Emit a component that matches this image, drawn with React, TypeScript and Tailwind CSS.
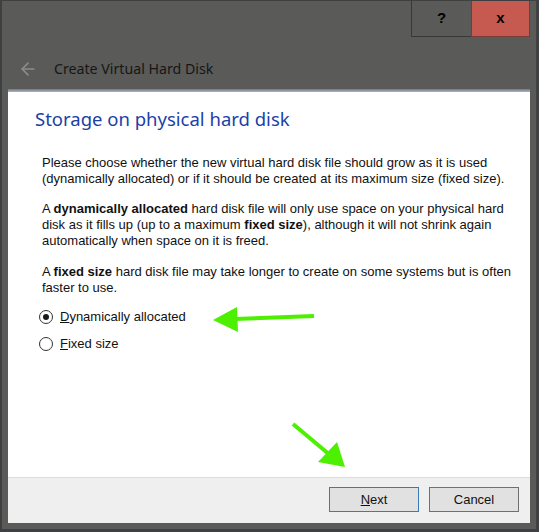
import { ArrowLeft } from 'lucide-react'

const ui = { fontFamily: '"Noto Sans", "Open Sans", sans-serif' }
const body = { fontFamily: '"Liberation Sans", Arial, sans-serif' }

function Radio({ checked, label, accel }: { checked: boolean; label: string; accel: string }) {
  return (
    <div className="flex items-center h-[16px]">
      <span className="w-[14px] h-[14px] rounded-full border border-[#333] bg-white flex items-center justify-center">
        {checked && <span className="w-[6px] h-[6px] rounded-full bg-[#1a1a1a]" />}
      </span>
      <span className="ml-[7px] text-[13px] text-[#111]" style={body}>
        <span className="underline">{accel}</span>
        {label}
      </span>
    </div>
  )
}

export default function App() {
  return (
    <div className="w-[539px] h-[532px] bg-[#3e4042] border-l-2 border-t border-r-[3px] border-b-[3px] border-[#3e4042] overflow-hidden">
      <div className="relative h-full bg-[#5a5a58] flex flex-col px-[6px] pb-[6px]">
        {/* caption buttons */}
        <div className="flex justify-end h-[36px] -mt-px">
          <div className="w-[60px] h-[37px] border border-[#383838] border-r-0 flex items-center justify-center text-[15px] font-bold text-black" style={body}>
            ?
          </div>
          <div className="w-[59px] h-[37px] bg-[#c75a50] border border-[#7a3a35] flex items-center justify-center text-[15px] font-bold text-black" style={body}>
            x
          </div>
        </div>

        {/* wizard header */}
        <div className="h-[53px] flex items-center pl-[10px] pt-[12px]">
          <ArrowLeft className="w-[20px] h-[20px] text-[#8c8c8a]" strokeWidth={2} />
          <span className="ml-[16px] text-[14.2px] text-[#161616]" style={ui}>
            Create Virtual Hard Disk
          </span>
        </div>

        <div className="h-[3px] bg-gradient-to-b from-[#6f7a86] to-[#a9b6c6]" />

        {/* page */}
        <div className="flex-1 bg-white pl-[27px] pr-4 pt-[14px]">
          <h1 className="text-[18.5px] text-[#1c3fa8] leading-[26px]" style={ui}>
            Storage on physical hard disk
          </h1>
          <div className="pl-[7px] mt-[23px] text-[13px] leading-[16px] text-[#111] whitespace-nowrap" style={body}>
            <p>
              Please choose whether the new virtual hard disk file should grow as it is used
              <br />
              (dynamically allocated) or if it should be created at its maximum size (fixed size).
            </p>
            <p className="mt-[14px]">
              A <b>dynamically allocated</b> hard disk file will only use space on your physical hard
              <br />
              disk as it fills up (up to a maximum <b>fixed size</b>), although it will not shrink again
              <br />
              automatically when space on it is freed.
            </p>
            <p className="mt-[15px]">
              A <b>fixed size</b> hard disk file may take longer to create on some systems but is often
              <br />
              faster to use.
            </p>
            <div className="mt-[13px] -ml-[3px] flex flex-col gap-[11px]">
              <Radio checked label="ynamically allocated" accel="D" />
              <Radio checked={false} label="ixed size" accel="F" />
            </div>
          </div>
        </div>

        {/* footer */}
        <div className="h-[46px] bg-[#efefef] border-t border-[#dcdcdc] flex items-start justify-end gap-[10px] pr-[11px] pt-[9px]">
          <button className="w-[90px] h-[25px] bg-[#e1e1e1] border border-[#3d7ab3] text-[13px] leading-[22px] text-[#111]" style={body}>
            <span className="underline">N</span>ext
          </button>
          <button className="w-[90px] h-[25px] bg-[#e1e1e1] border border-[#707070] text-[13px] leading-[22px] text-[#111]" style={body}>
            Cancel
          </button>
        </div>

        {/* annotation arrows */}
        <svg className="absolute left-[-2px] top-[-1px] pointer-events-none" width="539" height="532">
          <line x1="314" y1="316" x2="234" y2="319" stroke="#4cf000" strokeWidth="4" />
          <polygon points="213,320 237,307 238,332" fill="#4cf000" />
          <line x1="293" y1="424" x2="330" y2="455" stroke="#4cf000" strokeWidth="4" />
          <polygon points="345,467 318,462 337,442" fill="#4cf000" />
        </svg>
      </div>
    </div>
  )
}
